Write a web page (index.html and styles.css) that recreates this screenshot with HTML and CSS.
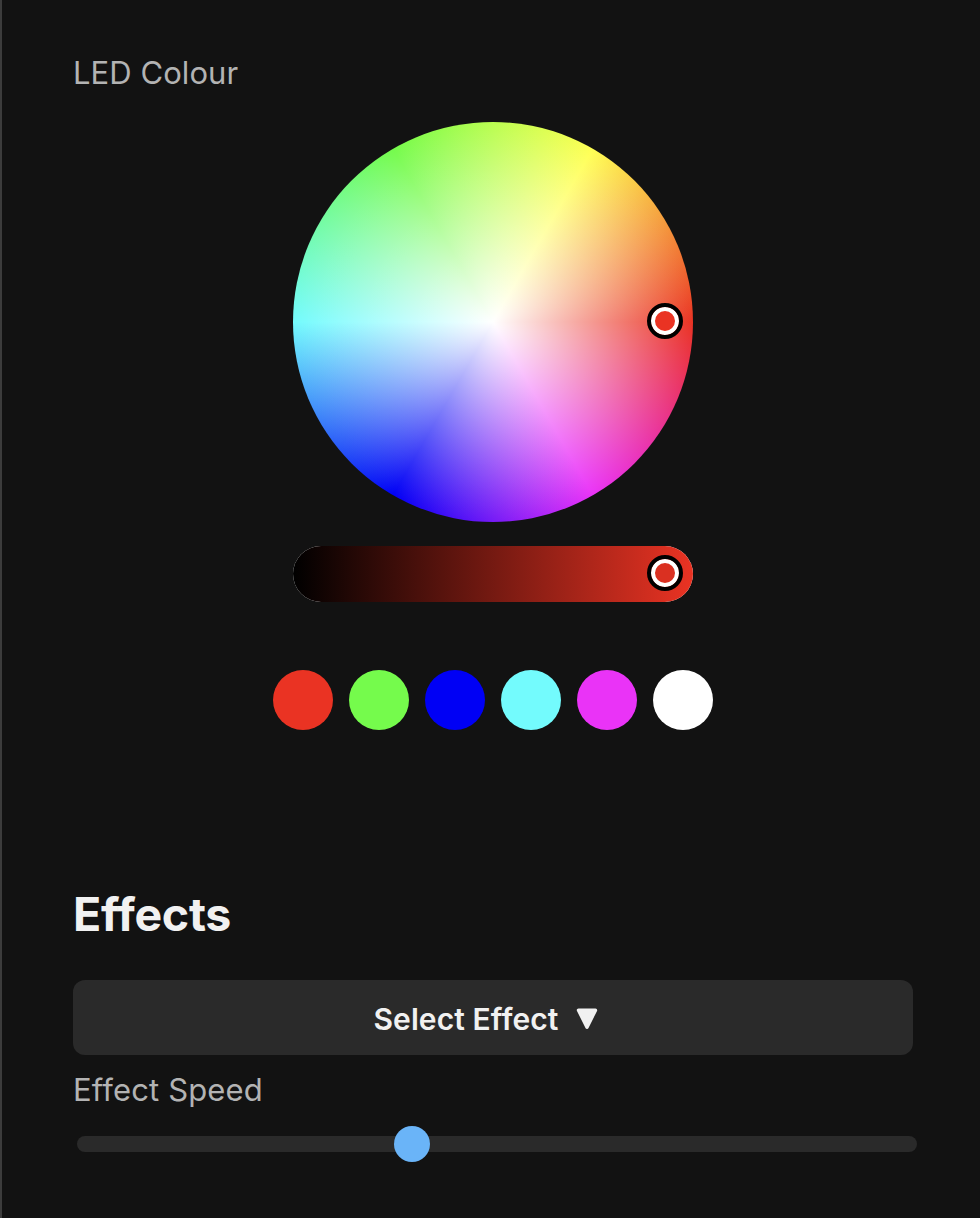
FILE: index.html
```html
<!DOCTYPE html>
<html lang="en">
<head>
<meta charset="utf-8">
<title>LED Colour</title>
<link rel="stylesheet" href="styles.css">
</head>
<body>
<main class="panel">
  <div class="label label-colour"><span>LED Colour</span></div>
  <section class="picker">
    <div class="wheel"><div class="handle"></div></div>
    <div class="value-slider"><div class="value-track"></div><div class="handle handle-value"></div></div>
  </section>
  <div class="swatches">
    <button class="swatch red" aria-label="Red"></button>
    <button class="swatch green" aria-label="Green"></button>
    <button class="swatch blue" aria-label="Blue"></button>
    <button class="swatch cyan" aria-label="Cyan"></button>
    <button class="swatch magenta" aria-label="Magenta"></button>
    <button class="swatch white" aria-label="White"></button>
  </div>
  <h2 class="heading"><span>Effects</span></h2>
  <button class="select">
    <span class="select-text">Select Effect</span>
    <svg class="caret" width="22" height="22" viewBox="0 0 22 22"><path d="M2.5 2.2H19.5L11 19.2Z" fill="#f1f1f1" stroke="#f1f1f1" stroke-width="3.4" stroke-linejoin="round"/></svg>
  </button>
  <div class="label label-speed"><span>Effect Speed</span></div>
  <div class="speed"><div class="thumb"></div></div>
</main>
</body>
</html>
```
FILE: styles.css
```css
* { box-sizing: border-box; }
body {
  margin: 0;
  background: #121212;
  font-family: Inter, "Liberation Sans", sans-serif;
}
.panel {
  height: 1218px;
  padding: 53px 67px 0 71px;
  border-left: 2px solid #3c3c3c;
  display: flex;
  flex-direction: column;
  overflow: hidden;
}
.label {
  height: 40px;
  line-height: 40px;
  font-size: 31px;
  font-weight: 430;
  color: #b3b3b3;
  white-space: nowrap;
}
.label-colour { letter-spacing: 0.06px; }
.label-speed { margin-top: 15px; letter-spacing: 0.15px; }
.picker {
  margin-top: 29px;
  display: flex;
  flex-direction: column;
  align-items: center;
  gap: 24px;
}
.wheel {
  position: relative;
  width: 400px;
  height: 400px;
  border-radius: 50%;
  background:
    radial-gradient(circle closest-side, #fff, transparent),
    conic-gradient(from 90deg, #ea3323, #ea33f7, #0000f5, #73fbfd, #75fb4c, #ffff54, #ea3323);
}
.value-slider {
  position: relative;
  width: 400px;
  height: 56px;
  border-radius: 28px;
  background: #fff;
}
.value-track {
  height: 56px;
  border-radius: 28px;
  background: linear-gradient(to right, #000, #ea3323);
}
.handle {
  position: absolute;
  left: 354px;
  top: 181px;
  width: 36px;
  height: 36px;
  border: 4px solid #000;
  border-radius: 50%;
  background: #ea3323;
  box-shadow: inset 0 0 0 4px #fff;
}
.handle-value { top: 9px; background: #da3021; }
.swatches {
  margin-top: 68px;
  display: flex;
  justify-content: center;
  gap: 16px;
}
.swatch {
  width: 60px;
  height: 60px;
  padding: 0;
  border: 0;
  border-radius: 50%;
}
.red { background: #ea3323; }
.green { background: #75fb4c; }
.blue { background: #0000f5; }
.cyan { background: #73fbfd; }
.magenta { background: #ea33f7; }
.white { background: #fff; }
.heading {
  margin: 154px 0 0;
  height: 60px;
  line-height: 60px;
  font-size: 46.5px;
  font-weight: 700;
  letter-spacing: -0.3px;
  color: #f1f1f1;
}
.select {
  margin-top: 36px;
  height: 75px;
  padding: 3px 15px 0 0;
  border: 0;
  border-radius: 12px;
  background: #2a2a2a;
  color: #f1f1f1;
  font: 600 30px Inter, "Liberation Sans", sans-serif;
  display: flex;
  align-items: center;
  justify-content: center;
  gap: 17px;
}
.select-text { letter-spacing: 0.1px; }
.speed {
  position: relative;
  flex: none;
  margin: 26px -4px 0 4px;
  height: 16px;
  border-radius: 8px;
  background: #2a2a2a;
}
.thumb {
  position: absolute;
  left: 317px;
  top: -10px;
  width: 36px;
  height: 36px;
  border-radius: 50%;
  background: #6ab4f8;
}
```
